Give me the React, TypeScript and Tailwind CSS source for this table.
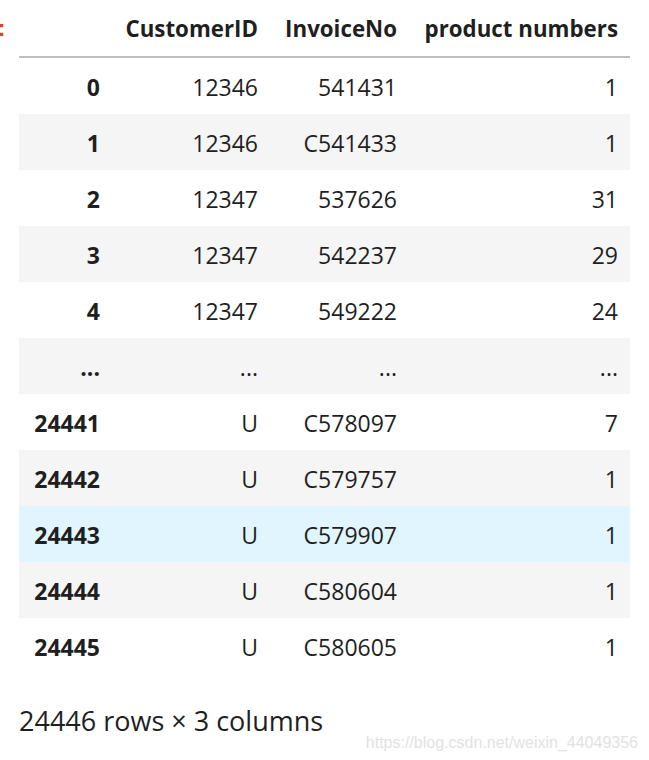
import React from "react";

const rows: { idx: string; cid: string; inv: string; pn: string }[] = [
  { idx: "0", cid: "12346", inv: "541431", pn: "1" },
  { idx: "1", cid: "12346", inv: "C541433", pn: "1" },
  { idx: "2", cid: "12347", inv: "537626", pn: "31" },
  { idx: "3", cid: "12347", inv: "542237", pn: "29" },
  { idx: "4", cid: "12347", inv: "549222", pn: "24" },
  { idx: "...", cid: "...", inv: "...", pn: "..." },
  { idx: "24441", cid: "U", inv: "C578097", pn: "7" },
  { idx: "24442", cid: "U", inv: "C579757", pn: "1" },
  { idx: "24443", cid: "U", inv: "C579907", pn: "1" },
  { idx: "24444", cid: "U", inv: "C580604", pn: "1" },
  { idx: "24445", cid: "U", inv: "C580605", pn: "1" },
];

export default function App() {
  return (
    <div className="w-[649px] h-[760px] bg-white text-[#1f1f1f] font-['Open_Sans',_sans-serif] overflow-hidden">
      <div className="flex">
        <div className="w-[19px] h-[56px] overflow-hidden flex items-center">
          <span className="-ml-[5px] font-['Liberation_Mono',_monospace] text-[22px] font-bold text-[#d84315] leading-none mt-[6px]">
            :
          </span>
        </div>
        <div className="w-[611px]">
          <div className="grid grid-cols-[93px_158px_139px_221px] h-[56px] pt-[2px] items-center text-[22.3px] font-bold text-right">
            <div className="pr-[12px]"></div>
            <div className="pr-[12px]">CustomerID</div>
            <div className="pr-[12px]">InvoiceNo</div>
            <div className="pr-[12px]">product numbers</div>
          </div>
          <div className="h-[2px] bg-[#bdbdbd]"></div>
          {rows.map((r, i) => (
            <div
              key={i}
              className={
                "grid grid-cols-[93px_158px_139px_221px] h-[56px] pt-[2px] items-center text-[23px] text-right " +
                (i === 8 ? "bg-[#e1f5fe]" : i % 2 === 1 ? "bg-[#f5f5f5]" : "bg-white")
              }
            >
              <div className="pr-[12px] font-bold">{r.idx}</div>
              <div className="pr-[12px]">{r.cid}</div>
              <div className="pr-[12px]">{r.inv}</div>
              <div className="pr-[12px]">{r.pn}</div>
            </div>
          ))}
        </div>
      </div>
      <div className="flex justify-between items-start pl-[19px] pr-[11px]">
        <p className="mt-[27px] text-[27px]">24446 rows × 3 columns</p>
        <span className="mt-[57px] font-['Liberation_Sans',_sans-serif] text-[16px] text-[#e2e2e2]">
          https://blog.csdn.net/weixin_44049356
        </span>
      </div>
    </div>
  );
}
